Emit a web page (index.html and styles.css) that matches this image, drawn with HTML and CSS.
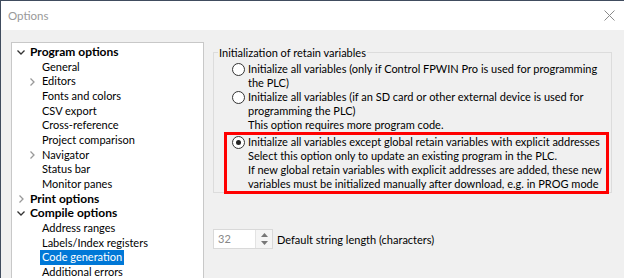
FILE: index.html
```html
<!DOCTYPE html>
<html lang="en">
<head>
  <meta charset="UTF-8">
  <title>Options</title>
  <link rel="stylesheet" href="styles.css">
</head>
<body>
  <div class="window">
    <div class="titlebar">
      <span class="title">Options</span>
      <svg class="close" width="11" height="11" viewBox="0 0 11 11"><path d="M0.5 0.5 L10.5 10.5 M10.5 0.5 L0.5 10.5" stroke="#8a8a8a" stroke-width="1" fill="none"/></svg>
    </div>

    <div class="content">
      <ul class="tree">
        <li class="node open"><span class="chev"><svg width="8" height="5" viewBox="0 0 8 5"><path d="M0.5 0.5 L4 4 L7.5 0.5" stroke="#333" stroke-width="1.3" fill="none"/></svg></span>Program options</li>
        <li class="leaf">General</li>
        <li class="leaf"><span class="chev"><svg width="5" height="8" viewBox="0 0 5 8"><path d="M0.5 0.5 L4 4 L0.5 7.5" stroke="#999" stroke-width="1.3" fill="none"/></svg></span>Editors</li>
        <li class="leaf">Fonts and colors</li>
        <li class="leaf">CSV export</li>
        <li class="leaf">Cross-reference</li>
        <li class="leaf">Project comparison</li>
        <li class="leaf"><span class="chev"><svg width="5" height="8" viewBox="0 0 5 8"><path d="M0.5 0.5 L4 4 L0.5 7.5" stroke="#999" stroke-width="1.3" fill="none"/></svg></span>Navigator</li>
        <li class="leaf">Status bar</li>
        <li class="leaf">Monitor panes</li>
        <li class="node"><span class="chev closed"><svg width="5" height="8" viewBox="0 0 5 8"><path d="M0.5 0.5 L4 4 L0.5 7.5" stroke="#999" stroke-width="1.3" fill="none"/></svg></span>Print options</li>
        <li class="node open"><span class="chev"><svg width="8" height="5" viewBox="0 0 8 5"><path d="M0.5 0.5 L4 4 L7.5 0.5" stroke="#333" stroke-width="1.3" fill="none"/></svg></span>Compile options</li>
        <li class="leaf">Address ranges</li>
        <li class="leaf">Labels/Index registers</li>
        <li class="leaf"><span class="selected">Code generation</span></li>
        <li class="leaf">Additional errors</li>
      </ul>

      <div class="panel">
        <fieldset class="group">
          <legend>Initialization of retain variables</legend>
          <div class="option">
            <span class="radio"></span>
            <div class="text">Initialize all variables (only if Control FPWIN Pro is used for programming the PLC)</div>
          </div>
          <div class="option">
            <span class="radio"></span>
            <div class="text">Initialize all variables (if an SD card or other external device is used for programming the PLC)<br>This option requires more program code.</div>
          </div>
          <div class="highlight">
            <div class="option">
              <span class="radio checked"></span>
              <div class="text">Initialize all variables except global retain variables with explicit addresses<br>Select this option only to update an existing program in the PLC.<br>If new global retain variables with explicit addresses are added, these new variables must be initialized manually after download, e.g. in PROG mode</div>
            </div>
          </div>
        </fieldset>

        <div class="spin-row">
          <div class="spin">
            <span class="spin-value">32</span>
            <span class="spin-buttons">
              <svg width="7" height="4" viewBox="0 0 7 4"><path d="M0 4 L3.5 0 L7 4 Z" fill="#777"/></svg>
              <svg width="7" height="4" viewBox="0 0 7 4"><path d="M0 0 L3.5 4 L7 0 Z" fill="#777"/></svg>
            </span>
          </div>
          <span class="spin-label">Default string length (characters)</span>
        </div>
      </div>
    </div>
  </div>
</body>
</html>
```

FILE: styles.css
```css
body {
  margin: 0;
  font-family: Lato, "Open Sans", sans-serif;
  font-size: 11px;
  color: #000;
}
.window {
  width: 624px;
  height: 278px;
  box-sizing: border-box;
  border-top: 1px solid #404c5e;
  border-left: 1px solid #404c5e;
  background-color: #f0f0f0;
  overflow: hidden;
}
.titlebar {
  height: 29px;
  background-color: white;
  display: flex;
  align-items: center;
  justify-content: space-between;
  padding: 0 9px 0 7px;
}
.title {
  color: #999;
  font-size: 11.5px;
}
.content {
  display: flex;
  padding: 12px 0 0 10px;
  align-items: flex-start;
}
.tree {
  list-style: none;
  margin: 0;
  padding: 2px 0 20px 0;
  width: 191px;
  height: 260px;
  background-color: white;
  border: 1px solid #c8c8c8;
}
.tree li {
  height: 14.67px;
  line-height: 14.67px;
  white-space: nowrap;
  display: flex;
  align-items: center;
}
.node {
  font-weight: bold;
  font-size: 12px;
  padding-left: 18px;
}
.leaf {
  padding-left: 30px;
}
.chev {
  display: inline-flex;
  align-items: center;
  box-sizing: border-box;
  width: 12px;
  margin-left: -12px;
}
.node .chev {
  width: 13px;
  margin-left: -13px;
}
.chev.closed {
  padding-left: 2px;
}
.selected {
  background-color: #0078d7;
  color: white;
  padding: 0 2px;
  margin-left: -2px;
}
.panel {
  margin: 4px 0 0 9px;
  width: 399px;
}
.group {
  margin: 0;
  padding: 3px 2px 0 10px;
  border: 1px solid #dcdcdc;
  min-width: 0;
}
.group legend {
  padding: 0 1px;
  margin-left: -6px;
}
.option {
  display: flex;
  align-items: flex-start;
  line-height: 14px;
}
.radio {
  flex: none;
  width: 11px;
  height: 11px;
  border: 1px solid #333;
  border-radius: 50%;
  background-color: white;
  margin: 1px 3px 0 8px;
  position: relative;
}
.radio.checked::after {
  content: "";
  position: absolute;
  left: 3px;
  top: 3px;
  width: 5px;
  height: 5px;
  border-radius: 50%;
  background-color: #222;
}
.highlight {
  border: 3px solid #ff0000;
  margin: 0 0 -2px 0;
  padding: 0;
}
.highlight .radio {
  margin-left: 5px;
}
.spin-row {
  display: flex;
  align-items: center;
  margin-top: 36px;
}
.spin {
  width: 58px;
  height: 18px;
  border: 1px solid #d9d9d9;
  background-color: white;
  display: flex;
  justify-content: space-between;
}
.spin-value {
  color: #888;
  padding-left: 4px;
  line-height: 18px;
}
.spin-buttons {
  width: 16px;
  border-left: 1px solid #e3e3e3;
  background-color: #f5f5f5;
  display: flex;
  flex-direction: column;
  align-items: center;
  justify-content: center;
  gap: 4px;
}
.spin-label {
  margin-left: 4px;
}
```
